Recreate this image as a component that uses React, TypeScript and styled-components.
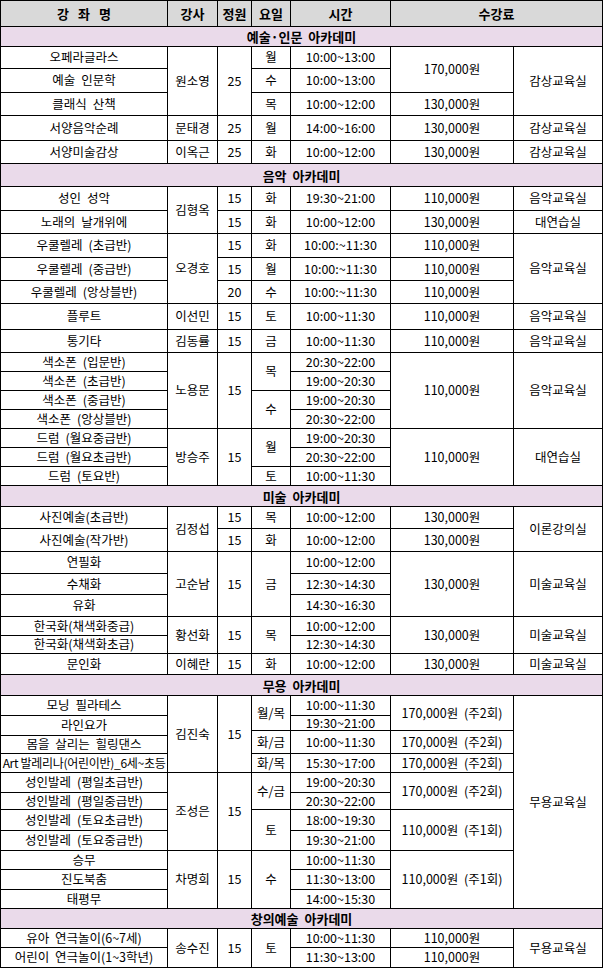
import { createGlobalStyle, styled } from "styled-components";

// horizontal rule positions (px from top), each track ends with its bottom border
const Y = [
    0, 26, 46, 68, 92, 115, 140, 163, 186, 210, 233, 257, 280, 303, 329, 352, 371, 390, 409, 428, 447,
    466, 485, 506, 528, 551, 573, 594, 616, 635, 653, 674, 695, 715, 730, 735, 753, 772, 792, 809, 830,
    850, 869, 889, 908, 928, 947, 967,
];

type Kind = "head" | "section" | "body";

interface Cell {
    c: number;
    span: number;
    t: number;
    b: number;
    text: string;
    kind: Kind;
}

type Entry = [number, number, string];

const cells: Cell[] = [];

const col = (c: number, entries: Entry[]) => {
    entries.forEach(([t, b, text]) => cells.push({ c, span: 1, t, b, text, kind: "body" }));
};

const section = (t: number, b: number, text: string) => {
    cells.push({ c: 1, span: 7, t, b, text, kind: "section" });
};

// header
["강 좌 명", "강사", "정원", "요일", "시간"].forEach((text, i) =>
    cells.push({ c: i + 1, span: 1, t: 0, b: 26, text, kind: "head" })
);
cells.push({ c: 6, span: 2, t: 0, b: 26, text: "수강료", kind: "head" });

// 예술·인문
section(26, 46, "예술·인문 아카데미");
col(1, [
    [46, 68, "오페라글라스"],
    [68, 92, "예술 인문학"],
    [92, 115, "클래식 산책"],
    [115, 140, "서양음악순례"],
    [140, 163, "서양미술감상"],
]);
col(2, [
    [46, 115, "원소영"],
    [115, 140, "문태경"],
    [140, 163, "이옥근"],
]);
col(3, [
    [46, 115, "25"],
    [115, 140, "25"],
    [140, 163, "25"],
]);
col(4, [
    [46, 68, "월"],
    [68, 92, "수"],
    [92, 115, "목"],
    [115, 140, "월"],
    [140, 163, "화"],
]);
col(5, [
    [46, 68, "10:00~13:00"],
    [68, 92, "10:00~13:00"],
    [92, 115, "10:00~12:00"],
    [115, 140, "14:00~16:00"],
    [140, 163, "10:00~12:00"],
]);
col(6, [
    [46, 92, "170,000원"],
    [92, 115, "130,000원"],
    [115, 140, "130,000원"],
    [140, 163, "130,000원"],
]);
col(7, [
    [46, 115, "감상교육실"],
    [115, 140, "감상교육실"],
    [140, 163, "감상교육실"],
]);

// 음악
section(163, 186, "음악 아카데미");
col(1, [
    [186, 210, "성인 성악"],
    [210, 233, "노래의 날개위에"],
    [233, 257, "우쿨렐레 (초급반)"],
    [257, 280, "우쿨렐레 (중급반)"],
    [280, 303, "우쿨렐레 (앙상블반)"],
    [303, 329, "플루트"],
    [329, 352, "통기타"],
    [352, 371, "색소폰 (입문반)"],
    [371, 390, "색소폰 (초급반)"],
    [390, 409, "색소폰 (중급반)"],
    [409, 428, "색소폰 (앙상블반)"],
    [428, 447, "드럼 (월요중급반)"],
    [447, 466, "드럼 (월요초급반)"],
    [466, 485, "드럼 (토요반)"],
]);
col(2, [
    [186, 233, "김형옥"],
    [233, 303, "오경호"],
    [303, 329, "이선민"],
    [329, 352, "김동률"],
    [352, 428, "노용문"],
    [428, 485, "방승주"],
]);
col(3, [
    [186, 210, "15"],
    [210, 233, "15"],
    [233, 257, "15"],
    [257, 280, "15"],
    [280, 303, "20"],
    [303, 329, "15"],
    [329, 352, "15"],
    [352, 428, "15"],
    [428, 485, "15"],
]);
col(4, [
    [186, 210, "화"],
    [210, 233, "화"],
    [233, 257, "화"],
    [257, 280, "월"],
    [280, 303, "수"],
    [303, 329, "토"],
    [329, 352, "금"],
    [352, 390, "목"],
    [390, 428, "수"],
    [428, 466, "월"],
    [466, 485, "토"],
]);
col(5, [
    [186, 210, "19:30~21:00"],
    [210, 233, "10:00~12:00"],
    [233, 257, "10:00:~11:30"],
    [257, 280, "10:00:~11:30"],
    [280, 303, "10:00:~11:30"],
    [303, 329, "10:00~11:30"],
    [329, 352, "10:00~11:30"],
    [352, 371, "20:30~22:00"],
    [371, 390, "19:00~20:30"],
    [390, 409, "19:00~20:30"],
    [409, 428, "20:30~22:00"],
    [428, 447, "19:00~20:30"],
    [447, 466, "20:30~22:00"],
    [466, 485, "10:00~11:30"],
]);
col(6, [
    [186, 210, "110,000원"],
    [210, 233, "130,000원"],
    [233, 257, "110,000원"],
    [257, 280, "110,000원"],
    [280, 303, "110,000원"],
    [303, 329, "110,000원"],
    [329, 352, "110,000원"],
    [352, 428, "110,000원"],
    [428, 485, "110,000원"],
]);
col(7, [
    [186, 210, "음악교육실"],
    [210, 233, "대연습실"],
    [233, 303, "음악교육실"],
    [303, 329, "음악교육실"],
    [329, 352, "음악교육실"],
    [352, 428, "음악교육실"],
    [428, 485, "대연습실"],
]);

// 미술
section(485, 506, "미술 아카데미");
col(1, [
    [506, 528, "사진예술(초급반)"],
    [528, 551, "사진예술(작가반)"],
    [551, 573, "연필화"],
    [573, 594, "수채화"],
    [594, 616, "유화"],
    [616, 635, "한국화(채색화중급)"],
    [635, 653, "한국화(채색화초급)"],
    [653, 674, "문인화"],
]);
col(2, [
    [506, 551, "김정섭"],
    [551, 616, "고순남"],
    [616, 653, "황선화"],
    [653, 674, "이혜란"],
]);
col(3, [
    [506, 528, "15"],
    [528, 551, "15"],
    [551, 616, "15"],
    [616, 653, "15"],
    [653, 674, "15"],
]);
col(4, [
    [506, 528, "목"],
    [528, 551, "화"],
    [551, 616, "금"],
    [616, 653, "목"],
    [653, 674, "화"],
]);
col(5, [
    [506, 528, "10:00~12:00"],
    [528, 551, "10:00~12:00"],
    [551, 573, "10:00~12:00"],
    [573, 594, "12:30~14:30"],
    [594, 616, "14:30~16:30"],
    [616, 635, "10:00~12:00"],
    [635, 653, "12:30~14:30"],
    [653, 674, "10:00~12:00"],
]);
col(6, [
    [506, 528, "130,000원"],
    [528, 551, "130,000원"],
    [551, 616, "130,000원"],
    [616, 653, "130,000원"],
    [653, 674, "130,000원"],
]);
col(7, [
    [506, 551, "이론강의실"],
    [551, 616, "미술교육실"],
    [616, 653, "미술교육실"],
    [653, 674, "미술교육실"],
]);

// 무용
section(674, 695, "무용 아카데미");
col(1, [
    [695, 715, "모닝 필라테스"],
    [715, 735, "라인요가"],
    [735, 753, "몸을 살리는 힐링댄스"],
    [753, 772, "Art 발레리나(어린이반)_6세~초등"],
    [772, 792, "성인발레 (평일초급반)"],
    [792, 809, "성인발레 (평일중급반)"],
    [809, 830, "성인발레 (토요초급반)"],
    [830, 850, "성인발레 (토요중급반)"],
    [850, 869, "승무"],
    [869, 889, "진도북춤"],
    [889, 908, "태평무"],
]);
col(2, [
    [695, 772, "김진숙"],
    [772, 850, "조성은"],
    [850, 908, "차명희"],
]);
col(3, [
    [695, 772, "15"],
    [772, 850, "15"],
    [850, 908, "15"],
]);
col(4, [
    [695, 730, "월/목"],
    [730, 753, "화/금"],
    [753, 772, "화/목"],
    [772, 809, "수/금"],
    [809, 850, "토"],
    [850, 908, "수"],
]);
col(5, [
    [695, 715, "10:00~11:30"],
    [715, 730, "19:30~21:00"],
    [730, 753, "10:00~11:30"],
    [753, 772, "15:30~17:00"],
    [772, 792, "19:00~20:30"],
    [792, 809, "20:30~22:00"],
    [809, 830, "18:00~19:30"],
    [830, 850, "19:30~21:00"],
    [850, 869, "10:00~11:30"],
    [869, 889, "11:30~13:00"],
    [889, 908, "14:00~15:30"],
]);
col(6, [
    [695, 730, "170,000원 (주2회)"],
    [730, 753, "170,000원 (주2회)"],
    [753, 772, "170,000원 (주2회)"],
    [772, 809, "170,000원 (주2회)"],
    [809, 850, "110,000원 (주1회)"],
    [850, 908, "110,000원 (주1회)"],
]);
col(7, [[695, 908, "무용교육실"]]);

// 창의예술
section(908, 928, "창의예술 아카데미");
col(1, [
    [928, 947, "유아 연극놀이(6~7세)"],
    [947, 967, "어린이 연극놀이(1~3학년)"],
]);
col(2, [[928, 967, "송수진"]]);
col(3, [[928, 967, "15"]]);
col(4, [[928, 967, "토"]]);
col(5, [
    [928, 947, "10:00~11:30"],
    [947, 967, "11:30~13:00"],
]);
col(6, [
    [928, 947, "110,000원"],
    [947, 967, "110,000원"],
]);
col(7, [[928, 967, "무용교육실"]]);

const rowTemplate = Y.slice(1)
    .map((y, i) => `${y - Y[i]}px`)
    .join(" ");

const line = (y: number) => Y.indexOf(y) + 1;

export default function App() {
    return (
        <>
            <GlobalStyle />
            <Schedule $rows={rowTemplate}>
                {cells.map((cell, i) => (
                    <Td
                        key={i}
                        $kind={cell.kind}
                        $narrow={cell.text.startsWith("Art")}
                        $area={`${line(cell.t)} / ${cell.c} / ${line(cell.b)} / ${cell.c + cell.span}`}
                    >
                        {cell.text}
                    </Td>
                ))}
            </Schedule>
        </>
    );
}

const GlobalStyle = createGlobalStyle`
    html, body {
        margin: 0;
        padding: 0;
        background: #ffffff;
    }
    body {
        font-family: "Noto Sans CJK KR", "Noto Sans", sans-serif;
        color: #000000;
    }
`;

const Schedule = styled.div<{ $rows: string }>`
    display: grid;
    width: max-content;
    grid-template-columns: 167px 50px 34px 39px 100px 123px 89px;
    grid-template-rows: ${(p) => p.$rows};
    border-top: 1px solid #000;
    border-left: 1px solid #000;
    box-sizing: content-box;
`;

const bg = { head: "#d9d9d9", section: "#eadaea", body: "#ffffff" };

const Td = styled.div<{ $kind: Kind; $area: string; $narrow: boolean }>`
    grid-area: ${(p) => p.$area};
    display: flex;
    align-items: center;
    justify-content: center;
    border-right: 1px solid #000;
    border-bottom: 1px solid #000;
    background: ${(p) => bg[p.$kind]};
    font-size: ${(p) => (p.$narrow ? "12px" : p.$kind === "body" ? "12.5px" : "13px")};
    font-weight: ${(p) => (p.$kind === "body" ? 400 : 700)};
    letter-spacing: ${(p) => (p.$narrow ? "-0.3px" : "0")};
    word-spacing: ${(p) => (p.$kind === "head" ? "6px" : p.$narrow ? "0" : "3px")};
    line-height: 1;
    white-space: nowrap;
    min-width: 0;
    min-height: 0;
`;
